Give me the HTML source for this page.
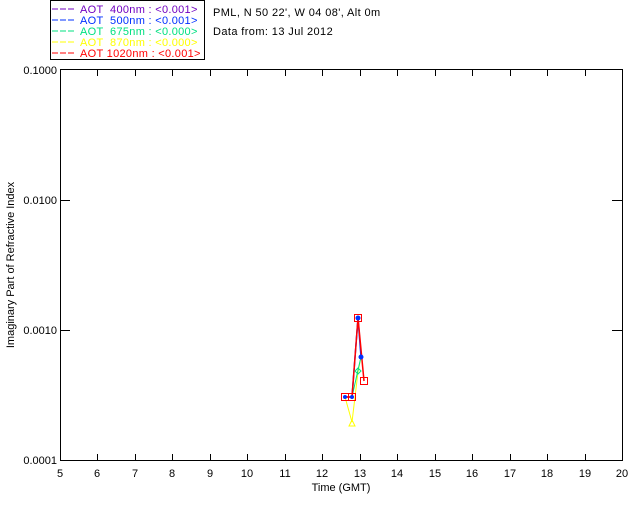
<!DOCTYPE html>
<html><head><style>body{margin:0;background:#fff}svg{display:block}text{font-family:"Liberation Sans",sans-serif;font-size:11px}.lg{letter-spacing:0.3px}</style></head><body>
<svg width="640" height="512" xmlns="http://www.w3.org/2000/svg" shape-rendering="crispEdges">
<rect x="50.5" y="0.5" width="154" height="59" fill="#fff" stroke="#000"/>
<g stroke-width="1">
<line x1="52" y1="9" x2="74" y2="9" stroke="#7000c0" stroke-dasharray="6,2"/>
<line x1="52" y1="20" x2="74" y2="20" stroke="#0030ff" stroke-dasharray="6,2"/>
<line x1="52" y1="31" x2="74" y2="31" stroke="#00e080" stroke-dasharray="6,2"/>
<line x1="52" y1="42" x2="74" y2="42" stroke="#ffff00" stroke-dasharray="6,2"/>
<line x1="52" y1="53" x2="74" y2="53" stroke="#ff0000" stroke-dasharray="6,2"/>
</g>
<g class="lg">
<text x="80" y="13" fill="#7000c0" xml:space="preserve">AOT  400nm : &lt;0.001&gt;</text>
<text x="80" y="24" fill="#0030ff" xml:space="preserve">AOT  500nm : &lt;0.001&gt;</text>
<text x="80" y="35" fill="#00e080" xml:space="preserve">AOT  675nm : &lt;0.000&gt;</text>
<text x="80" y="46" fill="#ffff00" xml:space="preserve">AOT  870nm : &lt;0.000&gt;</text>
<text x="80" y="57" fill="#ff0000" xml:space="preserve">AOT 1020nm : &lt;0.001&gt;</text>
<text x="213" y="16" style="letter-spacing:0.4px">PML, N 50 22', W 04 08', Alt 0m</text>
<text x="213" y="35" style="letter-spacing:0.4px">Data from: 13 Jul 2012</text>
</g>
<rect x="60.5" y="69.5" width="562" height="391" fill="none" stroke="#000"/>
<g stroke="#000">
<path d="M97.5 460v-6M135.5 460v-6M172.5 460v-6M210.5 460v-6M247.5 460v-6M285.5 460v-6M322.5 460v-6M360.5 460v-6M397.5 460v-6M435.5 460v-6M472.5 460v-6M510.5 460v-6M547.5 460v-6M585.5 460v-6"/>
<path d="M97.5 70v6M135.5 70v6M172.5 70v6M210.5 70v6M247.5 70v6M285.5 70v6M322.5 70v6M360.5 70v6M397.5 70v6M435.5 70v6M472.5 70v6M510.5 70v6M547.5 70v6M585.5 70v6"/>
<path d="M60 200.5h10M60 330.5h10M612 200.5h10M612 330.5h10"/>
</g>
<g text-anchor="end"><text x="57" y="74">0.1000</text><text x="57" y="204">0.0100</text><text x="57" y="334">0.0010</text><text x="57" y="464">0.0001</text></g>
<g text-anchor="middle">
<text x="60" y="477">5</text><text x="97" y="477">6</text><text x="135" y="477">7</text><text x="172" y="477">8</text><text x="210" y="477">9</text><text x="247" y="477">10</text><text x="285" y="477">11</text><text x="322" y="477">12</text><text x="360" y="477">13</text><text x="397" y="477">14</text><text x="435" y="477">15</text><text x="472" y="477">16</text><text x="510" y="477">17</text><text x="547" y="477">18</text><text x="585" y="477">19</text><text x="622" y="477">20</text>
<text x="341" y="491">Time (GMT)</text>
<text transform="translate(14,265) rotate(-90)">Imaginary Part of Refractive Index</text>
</g>
<g fill="none" shape-rendering="auto">
<polyline points="345,397 352,422 358,372 361,357" stroke="#ffff00"/>
<polyline points="345,397 352,397 358,370 361,357" stroke="#00e080"/>
<polyline points="345,397 352,397 358,318 361,357" stroke="#0030ff" stroke-width="1.5"/>
<polyline points="345,397 352,397 358,318 364,381" stroke="#ff0000" stroke-width="1.5"/>
<rect x="341.5" y="393.5" width="7" height="7" stroke="#ff0000"/>
<rect x="348.5" y="393.5" width="7" height="7" stroke="#ff0000"/>
<rect x="354.5" y="314.5" width="7" height="7" stroke="#ff0000"/>
<rect x="360.5" y="377.5" width="7" height="7" stroke="#ff0000"/>
<circle cx="358" cy="318" r="2.5" fill="#0030ff"/>
<circle cx="345" cy="397" r="2" fill="#0030ff"/>
<circle cx="352" cy="397" r="2" fill="#0030ff"/>
<circle cx="361" cy="357" r="2.5" fill="#0030ff"/>
<path d="M358 368l3 3-3 3-3-3z" stroke="#00e080"/>
<path d="M349 426h6l-3-6z" stroke="#ffff00"/>
</g>
</svg>
</body></html>
